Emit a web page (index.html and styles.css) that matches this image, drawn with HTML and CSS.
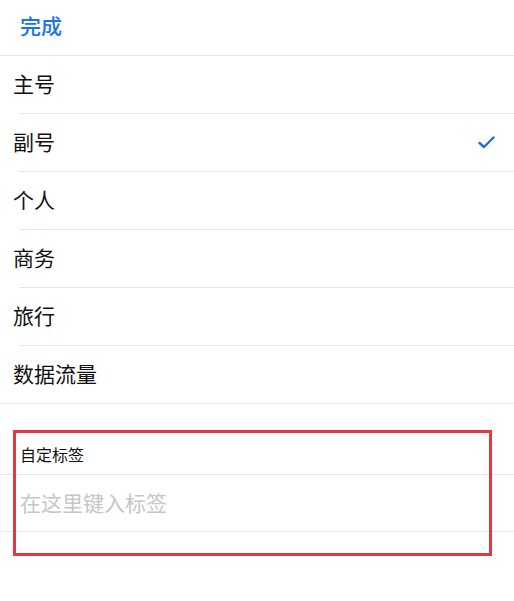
FILE: index.html
```html
<!DOCTYPE html>
<html lang="zh-CN">
<head>
<meta charset="utf-8">
<link rel="stylesheet" href="styles.css">
</head>
<body>
<div class="page">
  <header class="topbar"><span class="done">完成</span></header>
  <ul class="list">
    <li class="row inset">主号</li>
    <li class="row inset">副号
      <svg class="check" width="17" height="13" viewBox="0 0 17 13"><path d="M1.5 7 L6 11 L15.5 1.5" fill="none" stroke="#1a6fe3" stroke-width="2.4" stroke-linecap="round" stroke-linejoin="round"/></svg>
    </li>
    <li class="row inset">个人</li>
    <li class="row inset">商务</li>
    <li class="row inset">旅行</li>
    <li class="row full">数据流量</li>
  </ul>
  <div class="custom">
    <div class="custom-label">自定标签</div>
    <div class="custom-input">在这里键入标签</div>
  </div>
  <div class="highlight"></div>
</div>
</body>
</html>
```
FILE: styles.css
```css
* { box-sizing: border-box; }
html, body { margin: 0; padding: 0; background: #fff; }
body {
  font-family: "Noto Sans CJK SC", "Noto Sans", sans-serif;
  color: #111;
}
.page { position: relative; width: 514px; height: 601px; overflow: hidden; }
.topbar {
  height: 56px;
  padding-left: 20px;
  padding-bottom: 4px;
  display: flex;
  align-items: center;
  border-bottom: 1px solid #e6e6e6;
}
.done { font-size: 21px; font-weight: 500; color: #1a73e8; line-height: 1; }
.list { list-style: none; margin: 0; padding: 0; }
.row {
  height: 58px;
  padding-left: 13px;
  padding-right: 19px;
  padding-bottom: 3px;
  display: flex;
  align-items: center;
  justify-content: space-between;
  font-size: 21px;
  line-height: 1;
}
.row.inset {
  background: linear-gradient(#e6e6e6, #e6e6e6) no-repeat 19px 100% / calc(100% - 19px) 1px;
}
.row.full { border-bottom: 1px solid #e6e6e6; }
.check { display: block; margin-top: 2px; }
.custom-label {
  height: 71px;
  padding-left: 20px;
  padding-bottom: 9px;
  display: flex;
  align-items: flex-end;
  font-size: 16px;
  line-height: 22px;
  border-bottom: 1px solid #e6e6e6;
}
.custom-input {
  height: 57px;
  padding-left: 20px;
  padding-bottom: 2px;
  display: flex;
  align-items: center;
  font-size: 21px;
  line-height: 1;
  color: #c6c6c8;
  border-bottom: 1px solid #e6e6e6;
}
.highlight {
  position: absolute;
  left: 13px;
  top: 430px;
  width: 479px;
  height: 126px;
  border: 3px solid #e2383f;
}
```
